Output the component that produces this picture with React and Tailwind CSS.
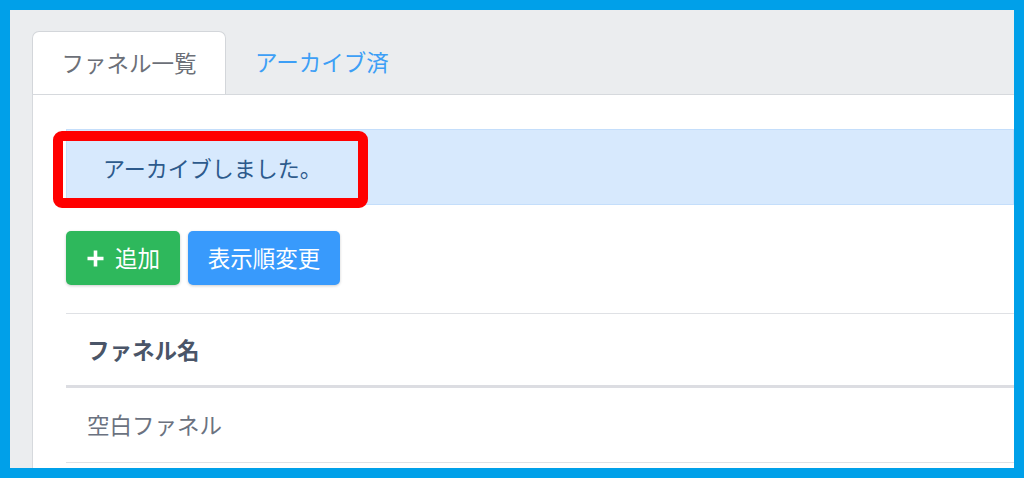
import React from 'react';

// ファネル一覧画面（アーカイブ完了メッセージ表示）
const PlusIcon = () => (
  <svg width="17" height="17" viewBox="0 0 17 17" className="shrink-0">
    <path d="M8.5 0.5v16M0.5 8.5h16" stroke="currentColor" strokeWidth="3.6" />
  </svg>
);

export default function App() {
  return (
    <div
      className="w-[1024px] h-[478px] bg-[#00a0e9] p-[10px] overflow-hidden"
      style={{ fontFamily: '"Noto Sans CJK JP", "Noto Sans", sans-serif' }}
    >
      <div className="h-full bg-[#ebedef] pt-[21px] pl-[22px] overflow-hidden">
        {/* Tabs */}
        <div className="flex items-end h-[63px]">
          <div className="w-[194px] h-[63px] bg-white border border-b-0 border-[#d3d6da] rounded-t-[7px] flex items-center justify-center pb-[1px] text-[22.5px] text-[#6c7078]">
            ファネル一覧
          </div>
          <div className="h-[63px] pl-[29px] pb-[1px] flex items-center text-[22.5px] text-[#3d9ff6]">
            アーカイブ済
          </div>
        </div>

        {/* Panel */}
        <div className="bg-white border-t border-l border-[#d6d9dd] h-full pt-[34px] pl-[33px]">
          <div className="relative">
            <div className="h-[76px] bg-[#d7e9fd] border border-[#c4defb] flex items-center pl-[36px] text-[22px] text-[#2d5a8c]">
              アーカイブしました。
            </div>
            <div className="absolute left-[-13px] top-[2px] w-[315px] h-[77px] border-[10px] border-[#ff0000] rounded-[9px]" />
          </div>

          <div className="flex gap-[8px] mt-[26px]">
            <button className="w-[114px] h-[54px] rounded-[5px] bg-[#2eb85c] text-white text-[22.5px] flex items-center justify-center gap-[11px] pl-[1px] shadow-[0_1px_3px_rgba(0,0,0,0.2)]">
              <PlusIcon />
              追加
            </button>
            <button className="w-[152px] h-[54px] rounded-[5px] bg-[#389afc] text-white text-[22.5px] flex items-center justify-center shadow-[0_1px_3px_rgba(0,0,0,0.2)]">
              表示順変更
            </button>
          </div>

          <div className="mt-[28px]">
            <div className="h-[75px] border-t border-b-[3px] border-t-[#dfe1e5] border-b-[#dcdde2] flex items-center pl-[21px] text-[22.5px] font-bold text-[#4a5568]">
              ファネル名
            </div>
            <div className="h-[75px] border-b border-[#dfe1e5] flex items-center pl-[21px] text-[22.5px] text-[#6b7280]">
              空白ファネル
            </div>
          </div>
        </div>
      </div>
    </div>
  );
}
